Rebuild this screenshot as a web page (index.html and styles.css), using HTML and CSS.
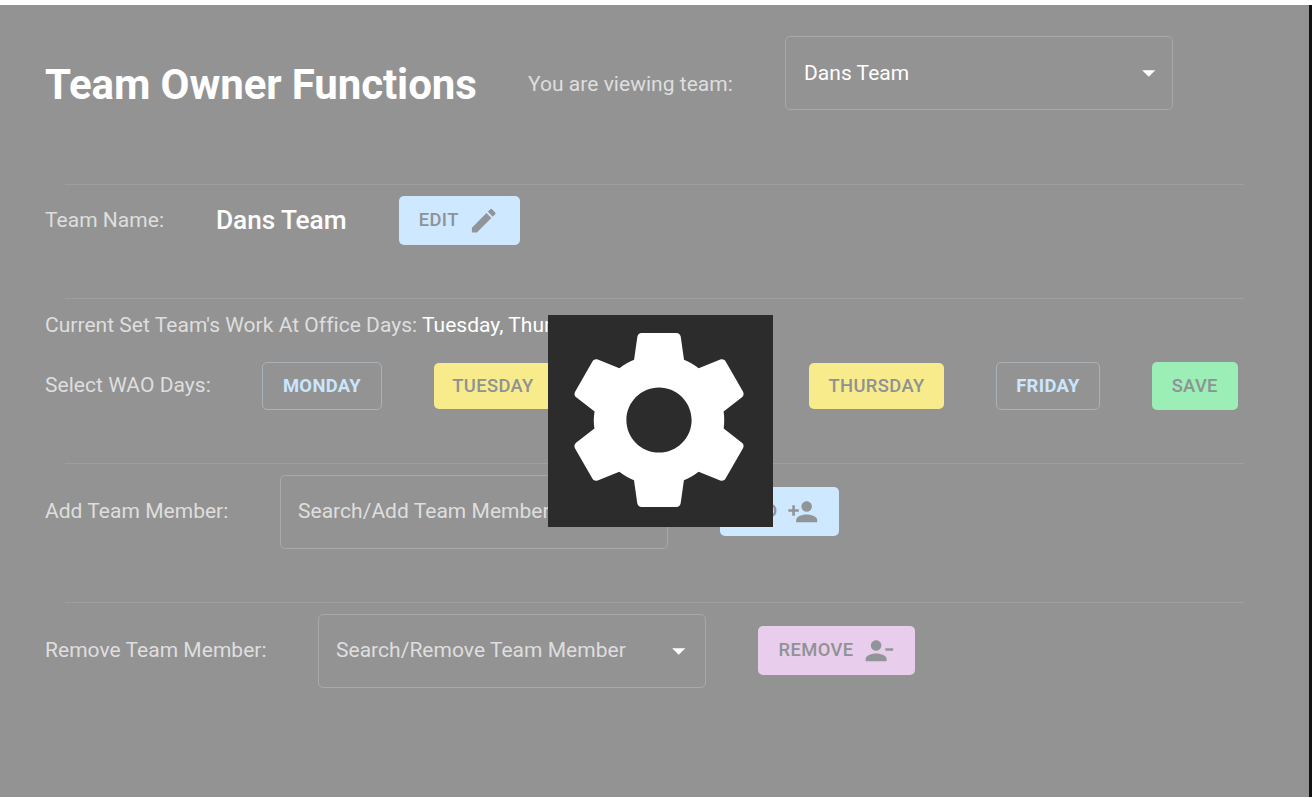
FILE: index.html
```html
<!DOCTYPE html>
<html lang="en">
<head>
<meta charset="utf-8">
<title>Team Owner Functions</title>
<link rel="stylesheet" href="styles.css">
</head>
<body>
<main class="panel">
  <header class="row row-header">
    <h1 class="title">Team Owner Functions</h1>
    <span class="label viewing">You are viewing team:</span>
    <div class="select select-team"><span>Dans Team</span><svg class="arrow" viewBox="0 0 24 24"><path d="M7 10l5 5 5-5z"/></svg></div>
  </header>
  <hr class="divider">
  <section class="row row-name">
    <span class="label label-name">Team Name:</span>
    <h2 class="team-name">Dans Team</h2>
    <button class="btn btn-blue btn-edit">Edit<svg class="icon" viewBox="0 0 24 24"><path d="M3 17.25V21h3.75L17.81 9.94l-3.75-3.75L3 17.25zM20.71 7.04c.39-.39.39-1.02 0-1.41l-2.34-2.34a.996.996 0 0 0-1.41 0l-1.83 1.83 3.75 3.75 1.83-1.83z"/></svg></button>
  </section>
  <hr class="divider">
  <section class="days">
    <p class="label current">Current Set Team's Work At Office Days: <span class="value">Tuesday, Thursday</span></p>
    <div class="row row-days">
      <span class="label label-days">Select WAO Days:</span>
      <button class="btn btn-outline btn-monday">Monday</button>
      <button class="btn btn-yellow btn-tuesday">Tuesday</button>
      <button class="btn btn-outline btn-wednesday">Wednesday</button>
      <button class="btn btn-yellow btn-thursday">Thursday</button>
      <button class="btn btn-outline btn-friday">Friday</button>
      <button class="btn btn-green btn-save">Save</button>
    </div>
  </section>
  <hr class="divider">
  <section class="row row-add">
    <span class="label label-add">Add Team Member:</span>
    <div class="select placeholder"><span>Search/Add Team Member</span><svg class="arrow" viewBox="0 0 24 24"><path d="M7 10l5 5 5-5z"/></svg></div>
    <button class="btn btn-blue btn-add">Add<svg class="icon" viewBox="0 0 24 24"><path d="M15 12c2.21 0 4-1.79 4-4s-1.79-4-4-4-4 1.79-4 4 1.79 4 4 4zm-9-2V7H4v3H1v2h3v3h2v-3h3v-2H6zm9 4c-2.67 0-8 1.34-8 4v2h16v-2c0-2.66-5.33-4-8-4z"/></svg></button>
  </section>
  <hr class="divider">
  <section class="row row-remove">
    <span class="label label-remove">Remove Team Member:</span>
    <div class="select placeholder"><span>Search/Remove Team Member</span><svg class="arrow" viewBox="0 0 24 24"><path d="M7 10l5 5 5-5z"/></svg></div>
    <button class="btn btn-purple btn-remove">Remove<svg class="icon" viewBox="0 0 24 24"><path d="M14 8c0-2.21-1.79-4-4-4S6 5.79 6 8s1.79 4 4 4 4-1.79 4-4zm3 2v2h6v-2h-6zM2 18v2h16v-2c0-2.66-5.33-4-8-4s-8 1.34-8 4z"/></svg></button>
  </section>
</main>
<div class="loader">
  <svg class="gear" viewBox="-0.252 0.411 24.834 23.4"><path d="M19.14 12.94c.04-.3.06-.61.06-.94 0-.32-.02-.64-.07-.94l2.03-1.58c.18-.14.23-.41.12-.61l-1.92-3.32c-.12-.22-.37-.29-.59-.22l-2.39.96c-.5-.38-1.03-.7-1.62-.94l-.36-2.54c-.04-.24-.24-.41-.48-.41h-3.84c-.24 0-.43.17-.47.41l-.36 2.54c-.59.24-1.13.57-1.62.94l-2.39-.96c-.22-.08-.47 0-.59.22L2.74 8.87c-.12.21-.08.47.12.61l2.03 1.58c-.05.3-.09.63-.09.94s.02.64.07.94l-2.03 1.58c-.18.14-.23.41-.12.61l1.92 3.32c.12.22.37.29.59.22l2.39-.96c.5.38 1.03.7 1.62.94l.36 2.54c.05.24.24.41.48.41h3.84c.24 0 .44-.17.47-.41l.36-2.54c.59-.24 1.13-.56 1.62-.94l2.39.96c.22.08.47 0 .59-.22l1.92-3.32c.12-.22.07-.47-.12-.61l-2.01-1.58zM12 15.6c-1.98 0-3.6-1.62-3.6-3.6s1.62-3.6 3.6-3.6 3.6 1.62 3.6 3.6-1.62 3.6-3.6 3.6z"/></svg>
</div>
</body>
</html>
```
FILE: styles.css
```css
* { box-sizing: border-box; }
html { height: 100%; overflow: hidden; background: #fff; }
body {
  margin: 0;
  height: 798px;
  padding-top: 5px;
  overflow: hidden;
  position: relative;
  font-family: Roboto, sans-serif;
  font-size: 21px;
  letter-spacing: 0.03px;
}
.panel {
  height: 792px;
  background: #939393;
  border-right: 3px solid #121212;
  padding-left: 45px;
}
.row { display: flex; align-items: center; }
.row > * { flex: none; }
.row-header { height: 179px; align-items: flex-start; padding-top: 31px; }
.title {
  width: 483px;
  margin: 24px 0 0;
  font-size: 42px;
  font-weight: 700;
  line-height: 50px;
  letter-spacing: -0.1px;
  color: #fff;
}
.label { color: #dedede; line-height: 32px; white-space: nowrap; }
.viewing { width: 257px; margin-top: 32px; }
.select {
  display: flex;
  align-items: center;
  justify-content: space-between;
  width: 388px;
  height: 74px;
  padding: 0 11px 2px 17px;
  border: 1px solid #a9a9a9;
  border-radius: 5px;
  color: #fff;
}
.select-team { padding: 0 8px 1px 18px; }
.placeholder { color: #dedede; }
.arrow { width: 31.5px; height: 31.5px; fill: #fff; }
.placeholder .arrow { margin-top: 2px; }
.divider { width: 1179px; height: 1px; margin: 0 0 0 20px; border: 0; background: #9f9f9f; }
.row-name { height: 113px; align-items: flex-start; padding-top: 11px; }
.label-name { width: 171px; margin-top: 8px; }
.team-name {
  width: 182.5px;
  margin: 4px 0 0;
  font-size: 26.25px;
  font-weight: 500;
  line-height: 40px;
  letter-spacing: -0.08px;
  color: #fff;
}
.btn {
  display: flex;
  align-items: center;
  justify-content: center;
  height: 48px;
  padding: 0 0 2px;
  border: 0;
  border-radius: 5px;
  font: 500 18.375px Roboto, sans-serif;
  letter-spacing: 0.36px;
  text-transform: uppercase;
  color: #8f9294;
}
.icon { width: 31.5px; height: 31.5px; margin-left: 9.5px; fill: #929598; position: relative; top: 1px; }
.btn-blue { background: #cde8ff; }
.btn-yellow { background: #f8eb8b; height: 46px; }
.btn-green { background: #9aeeb6; }
.btn-purple { background: #e9cdec; }
.btn-outline { background: transparent; border: 1px solid #a8b1b8; color: #cae6ff; font-weight: 700; }
.btn-edit { width: 121.5px; height: 49px; }
.days { height: 164px; padding-top: 10px; }
.current { margin: 0; }
.value { color: #fff; }
.row-days { height: 48px; margin-top: 21px; }
.label-days { width: 217px; margin-top: -2px; }
.btn-monday { width: 120px; margin-right: 52px; }
.btn-tuesday { width: 118px; margin-right: 52px; }
.btn-wednesday { width: 152px; margin-right: 53px; }
.btn-thursday { width: 135px; margin-right: 52px; }
.btn-friday { width: 104px; margin-right: 51.5px; }
.btn-save { width: 86.5px; }
.row-add, .row-remove { height: 138px; align-items: flex-start; padding-top: 11px; }
.label-add { width: 235px; margin-top: 20px; }
.btn-add { width: 119px; height: 49px; margin: 12px 0 0 52px; }
.label-remove { width: 273px; margin-top: 20px; }
.btn-remove { width: 157px; height: 49px; margin: 12px 0 0 52px; }
.loader { position: absolute; left: 548px; top: 315px; width: 225px; height: 212px; background: #2c2c2c; }
.gear { display: block; width: 100%; height: 100%; fill: #fff; }
```
